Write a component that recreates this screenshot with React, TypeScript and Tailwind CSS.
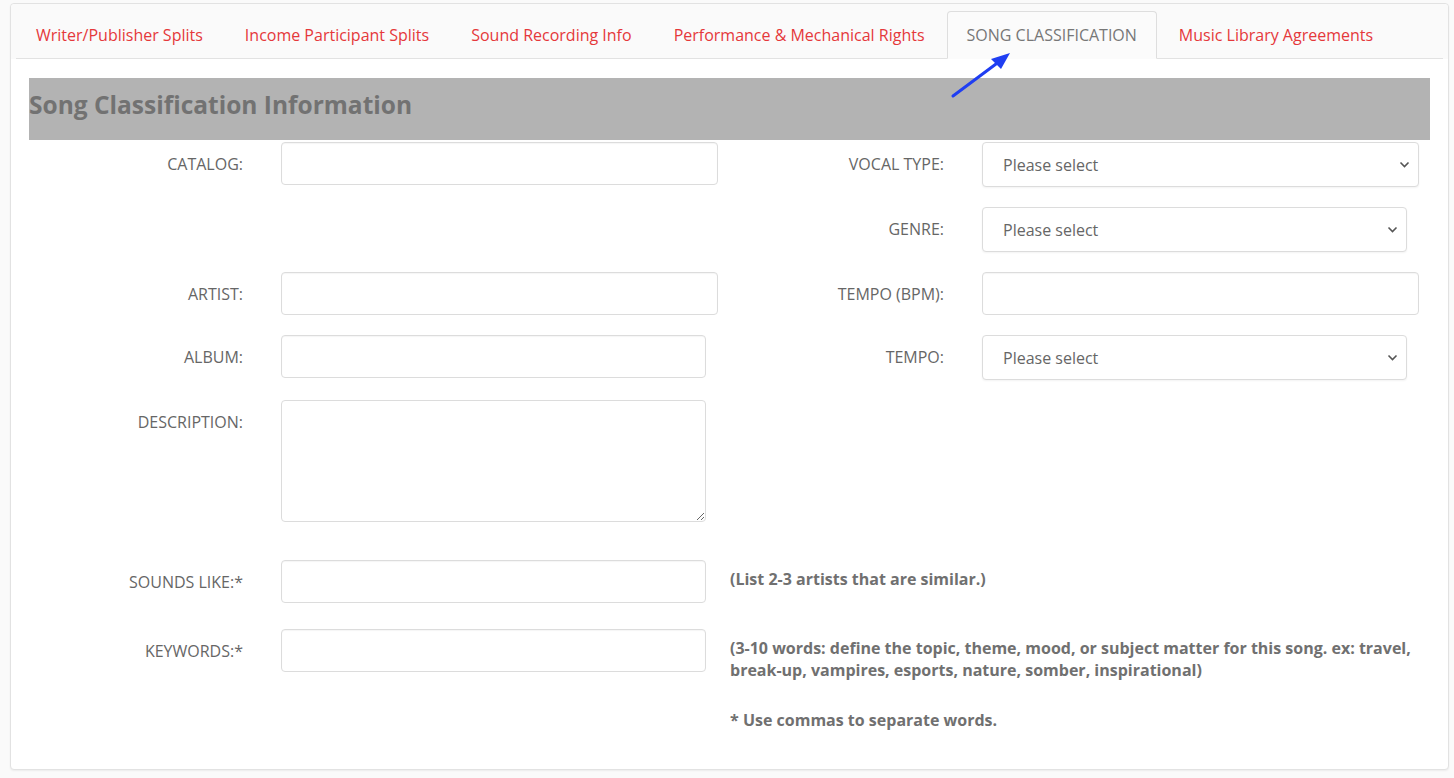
import React from "react";

const tabs = [
  "Writer/Publisher Splits",
  "Income Participant Splits",
  "Sound Recording Info",
  "Performance & Mechanical Rights",
  "SONG CLASSIFICATION",
  "Music Library Agreements",
];

function Label({ text, width }: { text: string; width: string }) {
  return (
    <div className={`${width} shrink-0 pt-[12px] text-right text-[16px] leading-5 text-[#666]`}>
      {text}
    </div>
  );
}

function TextInput({ width }: { width: string }) {
  return (
    <input
      type="text"
      className={`${width} ml-[38px] h-[43px] shrink-0 rounded border border-[#dcdcdc] bg-white px-3 text-[16px] shadow-[inset_0_1px_1px_rgba(0,0,0,0.04)] outline-none`}
    />
  );
}

function Select({ width }: { width: string }) {
  return (
    <div className={`${width} relative ml-[38px] shrink-0`}>
      <select className="h-[45px] w-full appearance-none rounded border border-[#dcdcdc] bg-white pl-5 text-[16px] text-[#666] shadow-[0_1px_2px_rgba(0,0,0,0.05)] outline-none">
        <option>Please select</option>
      </select>
      <svg
        className="pointer-events-none absolute right-[9px] top-[19px]"
        width="11"
        height="7"
        viewBox="0 0 11 7"
        fill="none"
      >
        <path d="M1.5 1.5l4 4 4-4" stroke="#555" strokeWidth="1.6" />
      </svg>
    </div>
  );
}

export default function App() {
  return (
    <div className="relative min-h-screen bg-[#fafafa] pl-[10px] pr-[5px] pt-[3px] pb-[8px] font-['Open_Sans',sans-serif]">
      <div className="rounded border border-[#e2e2e2] bg-white shadow-[0_1px_2px_rgba(0,0,0,0.06)]">
        {/* tabs */}
        <div className="rounded-t bg-[#fafafa] px-[5px] pt-[7px]">
          <ul className="flex border-b border-[#e2e2e2]">
            {tabs.map((t, i) => {
              const active = i === 4;
              return (
                <li
                  key={t}
                  className={
                    active
                      ? "-mb-px mr-[2px] flex h-[48px] items-center rounded-t border border-[#dedede] border-b-[#fbfbfb] bg-[#fbfbfb] px-[19px] text-[16px] text-[#777]"
                      : "mr-[2px] flex h-[47px] items-center border border-transparent px-[19px] text-[16px] text-[#e5383b]"
                  }
                >
                  {t}
                </li>
              );
            })}
          </ul>
        </div>

        {/* content */}
        <div className="px-[18px] pt-[19px] pb-[38px]">
          <div className="flex h-[62px] items-center bg-[#b3b3b3] pb-[8px]">
            <h2 className="text-[24.5px] font-bold text-[#727272]">Song Classification Information</h2>
          </div>

          <div className="mt-[2px] flex flex-col gap-5">
            <div className="flex items-start">
              <Label text="CATALOG:" width="w-[214px]" />
              <TextInput width="w-[437px]" />
              <Label text="VOCAL TYPE:" width="w-[226px]" />
              <Select width="w-[437px]" />
            </div>
            <div className="flex items-start">
              <div className="w-[689px] shrink-0" />
              <Label text="GENRE:" width="w-[226px]" />
              <Select width="w-[425px]" />
            </div>
            <div className="flex items-start">
              <Label text="ARTIST:" width="w-[214px]" />
              <TextInput width="w-[437px]" />
              <Label text="TEMPO (BPM):" width="w-[226px]" />
              <TextInput width="w-[437px]" />
            </div>
            <div className="flex items-start">
              <Label text="ALBUM:" width="w-[214px]" />
              <TextInput width="w-[425px]" />
              <div className="w-[12px] shrink-0" />
              <Label text="TEMPO:" width="w-[226px]" />
              <Select width="w-[425px]" />
            </div>
            <div className="flex items-start">
              <Label text="DESCRIPTION:" width="w-[214px]" />
              <textarea className="ml-[38px] h-[122px] w-[425px] shrink-0 rounded border border-[#dcdcdc] bg-white p-3 text-[16px] outline-none" />
            </div>
          </div>

          <div className="mt-[38px] flex items-start">
            <Label text="SOUNDS LIKE:*" width="w-[214px]" />
            <TextInput width="w-[425px]" />
            <p className="ml-[24px] pt-[8px] text-[16px] font-bold leading-[22px] text-[#707070]">
              (List 2-3 artists that are similar.)
            </p>
          </div>

          <div className="mt-[26px] flex items-start">
            <Label text="KEYWORDS:*" width="w-[214px]" />
            <TextInput width="w-[425px]" />
            <div className="ml-[24px] flex-1 pt-[8px] text-[16px] font-bold leading-[22px] text-[#707070]">
              <p>
                (3-10 words: define the topic, theme, mood, or subject matter for this song. ex: travel,
                break-up, vampires, esports, nature, somber, inspirational)
              </p>
              <p className="mt-[28px]">* Use commas to separate words.</p>
            </div>
          </div>
        </div>
      </div>

      {/* annotation arrow */}
      <svg
        className="pointer-events-none absolute left-[945px] top-[45px]"
        width="75"
        height="60"
        viewBox="0 0 75 60"
        fill="none"
      >
        <line x1="8" y1="51" x2="55" y2="16" stroke="#1f3ef2" strokeWidth="3" strokeLinecap="round" />
        <path d="M65 8L46 14L56 24Z" fill="#1f3ef2" />
      </svg>
    </div>
  );
}
